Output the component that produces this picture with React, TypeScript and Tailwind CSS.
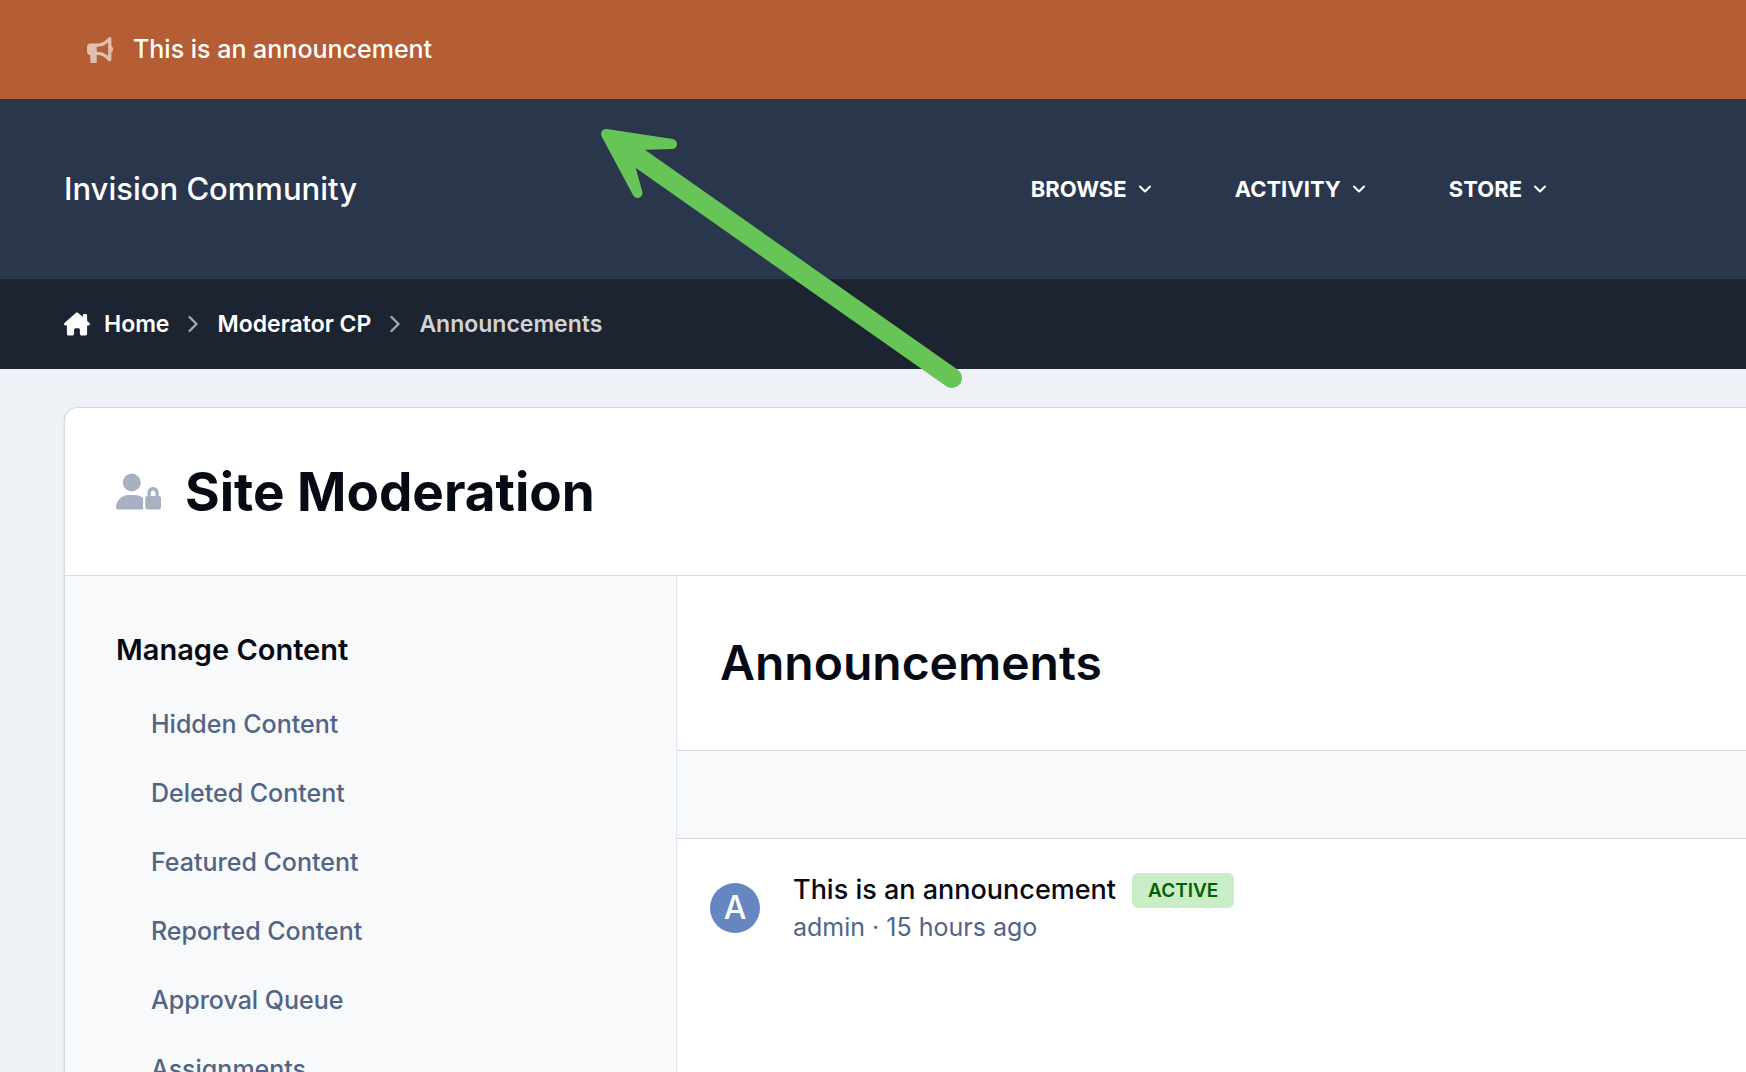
import { ChevronDown, ChevronRight } from "lucide-react";
import { FaBullhorn, FaHouseChimney, FaUserLock } from "react-icons/fa6";

const navItems = ["Browse", "Activity", "Store"];

const manageLinks = [
  "Hidden Content",
  "Deleted Content",
  "Featured Content",
  "Reported Content",
  "Approval Queue",
  "Assignments",
];

function AnnouncementBar() {
  return (
    <div className="flex items-center gap-5 bg-[#b55d34] px-[87px] py-8 text-white">
      <FaBullhorn className="size-[26px] opacity-60" />
      <a href="#" className="text-[25px] leading-[35px] font-medium">
        This is an announcement
      </a>
    </div>
  );
}

function Header() {
  return (
    <header className="flex h-[180px] shrink-0 items-center justify-between bg-[#2a364c] pr-[196px] pl-16 text-white">
      <a href="#" className="text-[31px] leading-[40px] font-medium">
        Invision Community
      </a>
      <nav className="flex gap-20">
        {navItems.map((item) => (
          <button key={item} className="flex items-center gap-2 text-[22px] leading-[32px] font-bold uppercase">
            {item}
            <ChevronDown className="size-5" strokeWidth={2.5} />
          </button>
        ))}
      </nav>
    </header>
  );
}

function Breadcrumb() {
  return (
    <nav
      aria-label="Breadcrumb"
      className="flex h-[90px] shrink-0 items-center gap-[10px] bg-[#1c2431] px-16 text-[23px] leading-[32px] font-semibold text-white"
    >
      <a href="#" className="flex items-center gap-[14px]">
        <FaHouseChimney className="size-[26px]" />
        Home
      </a>
      <ChevronRight className="size-7 opacity-60" />
      <a href="#">Moderator CP</a>
      <ChevronRight className="size-7 opacity-60" />
      <span className="text-[#d2d3d6]">Announcements</span>
    </nav>
  );
}

function Sidebar() {
  return (
    <aside className="w-[612px] shrink-0 border-r border-[#e2e6ed] bg-[#f8f9fb] px-[51px] py-[54px]">
      <h2 className="text-[29px] leading-[40px] font-semibold">Manage Content</h2>
      <ul className="mt-5 pl-[35px]">
        {manageLinks.map((link) => (
          <li key={link}>
            <a href="#" className="block text-[25px] leading-[69px] font-medium text-[#526485]">
              {link}
            </a>
          </li>
        ))}
      </ul>
    </aside>
  );
}

function AnnouncementRow() {
  return (
    <div className="flex items-center gap-[33px] px-[33px] py-8">
      <div className="flex size-[50px] items-center justify-center rounded-full bg-[#6586c0] text-[32px] font-medium text-white">
        A
      </div>
      <div>
        <div className="flex items-center gap-4">
          <a href="#" className="text-[27px] leading-[38px] font-medium">
            This is an announcement
          </a>
          <span className="rounded-md bg-[#c8edc7] px-4 text-[19px] leading-[35px] font-semibold text-[#006100]">
            ACTIVE
          </span>
        </div>
        <p className="text-[25px] leading-[36px] text-[#526485]">admin · 15 hours ago</p>
      </div>
    </div>
  );
}

export default function App() {
  return (
    <div className="relative flex h-screen flex-col overflow-hidden bg-[#eef1f6] font-['Inter',sans-serif] text-[#060a14]">
      <AnnouncementBar />
      <Header />
      <Breadcrumb />

      {/* Moderation panel */}
      <main className="mt-[38px] ml-16 flex grow flex-col rounded-tl-[14px] border-t border-l border-[#d5dbe4] bg-white shadow-sm">
        <div className="flex h-[168px] shrink-0 items-center gap-6 border-b border-[#d5dbe4] px-[51px]">
          <FaUserLock className="size-[45px] text-[#a7b1c2]" />
          <h1 className="text-[53px] leading-[64px] font-bold">Site Moderation</h1>
        </div>
        <div className="flex grow">
          <Sidebar />
          <section className="grow">
            <h2 className="border-b border-[#d5dbe4] px-[43px] py-[57px] text-[48px] leading-[60px] font-semibold">
              Announcements
            </h2>
            <div className="h-[88px] border-b border-[#d5dbe4] bg-[#f7f9fb]" />
            <AnnouncementRow />
          </section>
        </div>
      </main>

      {/* Arrow pointing up at the announcement bar */}
      <svg
        viewBox="0 0 370 266"
        className="pointer-events-none absolute top-[126px] left-[598px] w-[370px]"
        fill="#67c457"
        stroke="#67c457"
        strokeLinecap="round"
        strokeLinejoin="round"
      >
        <path d="M8 8 L74 18 L42 19 L32 40 L39.500 67 Z" strokeWidth="10" />
        <path d="M354 252 L34 27" strokeWidth="20" />
      </svg>
    </div>
  );
}
